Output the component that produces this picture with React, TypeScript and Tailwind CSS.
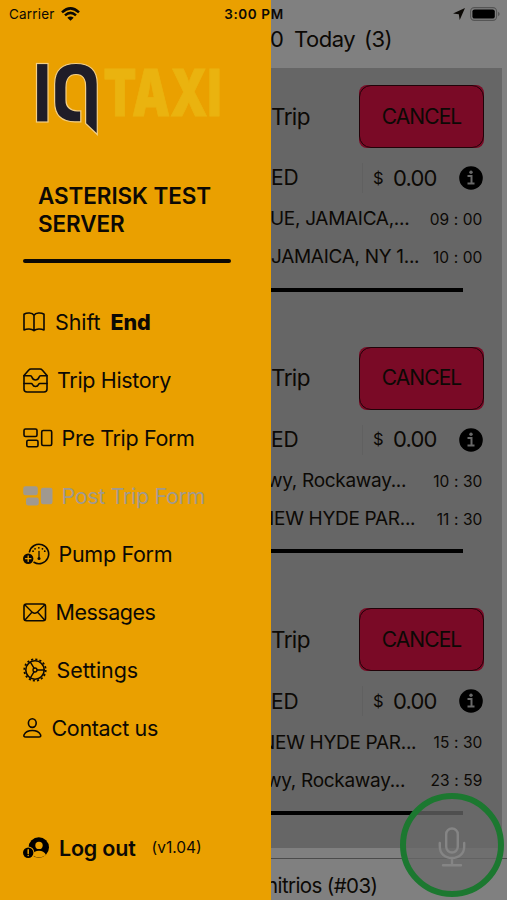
import type { ReactNode } from "react";
import clsx from "clsx";

interface MenuItem {
  label: string;
  icon: ReactNode;
  gap: string;
  tracking: string;
  strong?: string;
  disabled?: boolean;
}

interface Stop {
  address: string;
  time: string;
  offset: string;
}

const stroke = {
  fill: "none",
  stroke: "currentColor",
  strokeWidth: 1.6,
  strokeLinecap: "round",
  strokeLinejoin: "round",
} as const;

function BookIcon() {
  return (
    <svg width="22" height="20" viewBox="0 0 22 20" {...stroke}>
      <path d="M11 3.2C9.2 .6 4 .4 1 2.3V18c3-1.5 7.500-1.500 10 .6 2.500-2.100 7-2.100 10-.6V2.300C18 .4 12.800 .6 11 3.200V18.400" />
    </svg>
  );
}

function ArchiveIcon() {
  return (
    <svg width="25" height="25" viewBox="0 0 25 25" {...stroke}>
      <path d="M1 7.500 5.800 2Q6.600 1 8 1h9q1.400 0 2.200 1L24 7.500V21q0 3-3 3H4q-3 0-3-3Z" />
      <path d="M1 7.800h6.300c1 0 1.400.6 1.700 1.500.6 1.900 1.800 2.700 3.500 2.700s2.900-.8 3.500-2.700c.3-.9.700-1.500 1.700-1.500H24" />
      <path d="M1 15.500h7.200c.7 0 1 .4 1.300 1 .5 1.300 1.500 2 3 2s2.500-.7 3-2c.3-.6.600-1 1.300-1H24" />
    </svg>
  );
}

function GroupIcon({ filled = false }: { filled?: boolean }) {
  return (
    <svg width="30" height="20" viewBox="0 0 30 20" {...stroke} fill={filled ? "currentColor" : "none"}>
      <rect x="1" y="1" width="13" height="7.500" rx="1.500" />
      <rect x="3.800" y="12.200" width="11.200" height="6.500" rx="1.500" />
      <rect x="18.700" y="2.500" width="10" height="15" rx="1.500" />
    </svg>
  );
}

function GaugeIcon() {
  return (
    <svg width="27" height="22" viewBox="0 0 27 22" {...stroke}>
      <path d="M6.500 8.800A9.700 9.700 0 1 1 11 19.300" />
      <path d="M10 8.200h.1M12 5.800h.1M15.800 4.800h.1M19.400 5.800h.1M21.700 8.200h.1" strokeWidth="1.700" />
      <path d="M16 8.500v6" strokeWidth="1.300" />
      <circle cx="16" cy="15.500" r="1.500" fill="currentColor" stroke="none" />
      <circle cx="5.200" cy="15.700" r="5.200" fill="currentColor" stroke="none" />
      <path d="M5.200 13v5.400M2.500 15.700h5.400" className="stroke-[#eaa000]" strokeWidth="1.300" />
    </svg>
  );
}

function MailIcon() {
  return (
    <svg width="24" height="19" viewBox="0 0 24 19" {...stroke}>
      <rect x="1" y="1" width="21.500" height="16.800" rx="2.500" />
      <path d="m2 2 7.500 7.400q2.200 1.900 4.500 0L21.600 2M2 17l6.700-7.500M21.600 17l-6.700-7.500" strokeWidth="1.400" />
    </svg>
  );
}

function GearIcon() {
  return (
    <svg width="24" height="24" viewBox="0 0 24 24" {...stroke}>
      <circle cx="12" cy="12" r="9.200" />
      <circle cx="12" cy="12" r="10.700" strokeWidth="1.800" strokeDasharray="2.100 2.100" strokeLinecap="butt" />
      <circle cx="12" cy="12" r="2" strokeWidth="1.300" />
      <path d="M14 12h7M11 10.200 7.400 4.200M11 13.800l-3.600 6" strokeWidth="1.400" />
    </svg>
  );
}

function PersonIcon() {
  return (
    <svg width="19" height="20" viewBox="0 0 19 20" {...stroke}>
      <ellipse cx="9.300" cy="5.100" rx="3.900" ry="4.300" />
      <path d="M2.700 19h13.200c1.700 0 2.200-1.100 1.500-2.500-1.300-2.500-4.300-4-8.100-4s-6.800 1.500-8.100 4C.5 17.900 1 19 2.700 19Z" />
    </svg>
  );
}

function LogoutIcon() {
  return (
    <svg width="27" height="22" viewBox="0 0 27 22">
      <circle cx="15.800" cy="10.500" r="10.200" />
      <circle cx="16" cy="8.400" r="3.700" fill="#eaa000" />
      <path d="M8.800 18c1.600-3 4-4.300 7.200-4.300s5.500 1.400 7 4.200c-3.800 3.200-10 3.400-14.200.1Z" fill="#eaa000" />
      <circle cx="5.200" cy="15.700" r="6.200" fill="#eaa000" />
      <circle cx="5.200" cy="15.700" r="5.200" />
      <path d="M5.200 12.700v3.700M5.200 18.500v.1" stroke="#eaa000" strokeWidth="1.500" strokeLinecap="round" />
    </svg>
  );
}

function Logo() {
  return (
    <svg width="200" height="78" viewBox="0 0 200 78" className="block">
      <g fill="#1f1d28" stroke="#f3cf86" strokeWidth="1.200">
        <rect x="5.500" y="3.500" width="11.500" height="58.500" />
        <path d="M49.800 61.800v-11h-3.600Q35 50.400 35 40V27.500Q35 14.500 45 14.500T54.600 27.500V63.500L66.300 74.500V24Q66.300 3.500 45 3.500T23.600 24V42Q23.600 61.800 44 61.800Z" />
      </g>
      <text
        x="72.500"
        y="56"
        fontFamily="Inter, sans-serif"
        fontWeight="900"
        fontSize="64"
        textLength="118"
        lengthAdjust="spacingAndGlyphs"
        fill="#eab30f"
        stroke="#eab30f"
        strokeWidth=".8"
      >
        TAXI
      </text>
    </svg>
  );
}

const MENU: MenuItem[] = [
  { label: "Shift", strong: "End", icon: <BookIcon />, gap: "gap-[10px]", tracking: "tracking-[-0.1px]" },
  { label: "Trip History", icon: <ArchiveIcon />, gap: "gap-[9px]", tracking: "tracking-[-0.35px]" },
  { label: "Pre Trip Form", icon: <GroupIcon />, gap: "gap-[8.500px]", tracking: "tracking-[-0.35px]" },
  { label: "Post Trip Form", icon: <GroupIcon filled />, gap: "gap-[8.500px]", tracking: "tracking-[-0.35px]", disabled: true },
  { label: "Pump Form", icon: <GaugeIcon />, gap: "gap-[8.500px]", tracking: "tracking-[-0.3px]" },
  { label: "Messages", icon: <MailIcon />, gap: "gap-[8.500px]", tracking: "tracking-[-0.5px]" },
  { label: "Settings", icon: <GearIcon />, gap: "gap-[9.500px]", tracking: "tracking-[-0.1px]" },
  { label: "Contact us", icon: <PersonIcon />, gap: "gap-[9.500px]", tracking: "tracking-[-0.35px]" },
];

const TRIPS: Stop[][] = [
  [
    { address: "UE, JAMAICA,...", time: "09 : 00", offset: "-ml-px" },
    { address: "JAMAICA, NY 1...", time: "10 : 00", offset: "ml-0" },
  ],
  [
    { address: "wy, Rockaway...", time: "10 : 30", offset: "-ml-[4px]" },
    { address: "NEW HYDE PAR...", time: "11 : 30", offset: "-ml-[11px]" },
  ],
  [
    { address: "NEW HYDE PAR...", time: "15 : 30", offset: "-ml-[10px]" },
    { address: "wy, Rockaway...", time: "23 : 59", offset: "-ml-[5px]" },
  ],
];

function StatusBar() {
  return (
    <div className="absolute inset-x-0 top-0 flex h-7 items-center justify-between pr-[7px] pl-[9px] text-[13.500px]">
      <div className="flex w-40 items-center gap-[6px]">
        <span className="tracking-[0.2px]">Carrier</span>
        <svg width="19" height="14" viewBox="0 0 19 14" {...stroke} strokeWidth="2.500" strokeLinecap="butt">
          <path d="M1 5.300Q9.500-2.500 18 5.300M4 8.400q5.500-5 11 0" />
          <path d="m6.300 10.800 3.200 3 3.200-3q-3.200-2.600-6.400 0Z" fill="currentColor" stroke="none" />
        </svg>
      </div>
      <span className="-ml-px font-semibold tracking-[0.600px]">3:00 PM</span>
      <div className="flex w-40 items-center justify-end gap-[5px]">
        <svg width="12" height="12" viewBox="0 0 12 12">
          <path d="M12 0 6.700 12 5.800 6.300 0 5.400Z" fill="currentColor" />
        </svg>
        <svg width="30" height="14" viewBox="0 0 30 14">
          <rect x=".6" y=".6" width="26" height="12.800" rx="3.800" fill="none" stroke="#555555" strokeWidth="1.100" />
          <rect x="2.400" y="2.400" width="22.400" height="9.200" rx="2.200" />
          <path d="M28 4.800q1.700.7 1.700 2.200T28 9.200Z" fill="#555555" />
        </svg>
      </div>
    </div>
  );
}

function TripCard({ stops }: { stops: Stop[] }) {
  return (
    <section className="flex h-[261.700px] flex-col pt-[17px]">
      <div className="flex h-[63px] items-center justify-between pr-[18px]">
        <span className="text-[22.500px] tracking-[-0.600px]">Trip</span>
        <button className="h-[63px] w-[125px] rounded-[8px] bg-[#7a0a26]">
          <span className="flex h-full items-center justify-center rounded-[12px] border-[1.500px] border-[#210208] text-[21px] tracking-[-0.900px]">
            CANCEL
          </span>
        </button>
      </div>
      <div className="mt-[7.500px] flex h-[45px] items-center pr-[19px]">
        <span className="w-[91px] text-[21px] tracking-[-0.1px]">ED</span>
        <span className="h-[30px] w-px bg-[#606060]" />
        <span className="ml-[10px] w-[20px] text-[16.500px]">$</span>
        <span className="flex-1 text-[22px] tracking-[-0.800px]">0.00</span>
        <svg width="24" height="24" viewBox="0 0 24 24">
          <circle cx="12" cy="12" r="11.800" />
          <path d="M8.500 10h4v7.500M8.500 17.500h7" fill="none" stroke="#696969" strokeWidth="2" />
          <circle cx="12" cy="6.300" r="1.700" fill="#696969" />
        </svg>
      </div>
      {stops.map((stop) => (
        <div key={stop.time} className="flex h-[38px] items-center justify-between pr-[19.500px] whitespace-nowrap">
          <span className={clsx("text-[19px] tracking-[-0.300px]", stop.offset)}>{stop.address}</span>
          <span className="text-[15.500px] tracking-[0.1px]">{stop.time}</span>
        </div>
      ))}
      <div className="mt-[11px] h-1 w-[192px] shrink-0 bg-black" />
    </section>
  );
}

export default function App() {
  return (
    <div className="relative flex h-[900px] w-[507px] overflow-hidden bg-[#808080] font-['Inter',sans-serif] text-[#0c0905]">
      <aside className="flex w-[271px] shrink-0 flex-col bg-[#eaa000] pt-[60px]">
        <div className="pl-[31px]">
          <Logo />
        </div>
        <h1 className="mt-[44px] ml-[38px] text-[22.500px] leading-[28px] font-semibold tracking-[-0.1px]">
          ASTERISK TEST
          <br />
          SERVER
        </h1>
        <div className="mt-[21px] ml-[23px] h-[4px] w-[208px] rounded-full bg-[#0c0905]" />
        <nav className="mt-[30px] pl-[23px]">
          {MENU.map((item) => (
            <a
              key={item.label}
              className={clsx("flex h-[58px] items-center text-[21.500px]", item.gap, item.tracking, item.disabled && "text-[#a0998f]")}
            >
              {item.icon}
              <span>{item.label}</span>
              {item.strong && <span className="font-extrabold">{item.strong}</span>}
            </a>
          ))}
        </nav>
        <div className="mt-[62px] flex h-[58px] items-center pl-[23px]">
          <LogoutIcon />
          <span className="ml-[9px] text-[21.500px] font-semibold tracking-[-0.200px]">Log out</span>
          <span className="ml-[16px] text-[15.500px]">(v1.04)</span>
        </div>
      </aside>

      <main className="flex w-[236px] flex-col overflow-hidden">
        <header className="flex h-[68px] shrink-0 items-end pb-[13px] text-[22px] leading-[32px] tracking-[-0.5px]">
          <span className="-ml-px w-[24px]">0</span>
          <span className="w-[70px]">Today</span>
          <span>(3)</span>
        </header>
        <div className="mr-[5px] h-[780px] shrink-0 overflow-hidden bg-[#666666]">
          {TRIPS.map((stops, i) => (
            <TripCard key={i} stops={stops} />
          ))}
        </div>
        <footer className="mt-[10px] flex flex-1 items-center border-t border-[#4b4b4b] pt-[12px]">
          <span className="-ml-[5px] text-[20.500px] tracking-[-0.600px]">nitrios (#03)</span>
        </footer>
      </main>

      <button className="absolute top-[793px] left-[400px] flex size-[104px] items-center justify-center rounded-full border-[6px] border-[#1c7830] bg-[#6a6a6a]/75">
        <svg width="28" height="40" viewBox="0 0 28 40" {...stroke} className="mt-[3px] text-[#858585]" strokeWidth="2.400">
          <rect x="8.200" y="1.500" width="11.600" height="24" rx="5.800" />
          <path d="M1.800 16v3.500c0 7 5 11.500 12.200 11.500s12.200-4.500 12.200-11.500V16M14 31v7M5 38.300h18" />
        </svg>
      </button>

      <StatusBar />
    </div>
  );
}
